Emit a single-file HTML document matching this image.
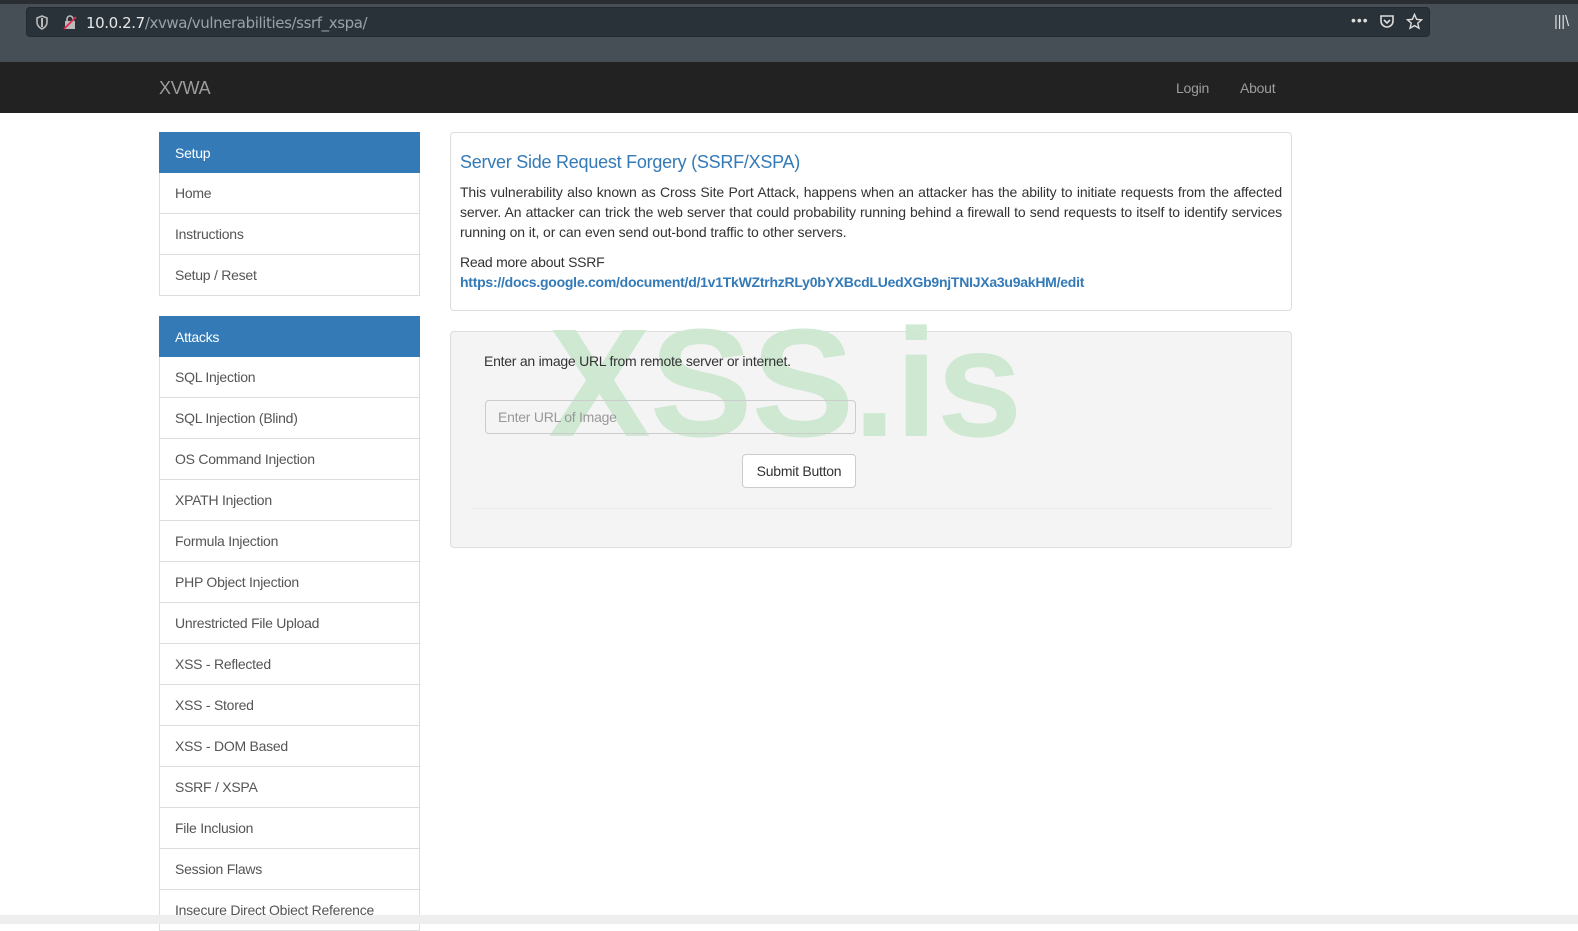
<!DOCTYPE html>
<html><head><meta charset="utf-8"><style>
*{box-sizing:border-box;margin:0;padding:0}
body{width:1578px;height:924px;overflow:hidden;font-family:"Liberation Sans",sans-serif;background:#fff;position:relative;font-size:14px;color:#333;letter-spacing:-0.25px}
.top{position:absolute;left:0;top:0;width:1578px;height:62px;background:#474f56;border-top:4px solid #2a2e33}
.url{position:absolute;left:26px;top:7px;width:1404px;height:30px;background:#2a3239;border-radius:4px;border:1px solid #222a30;letter-spacing:0}
.url .t{position:absolute;left:59px;top:6px;font-size:15px;color:#e6e8ea;font-family:"DejaVu Sans",sans-serif;letter-spacing:-.4px}
.url .t span{color:#9aa2a9}
.nav{position:absolute;left:0;top:62px;width:1578px;height:51px;background:#222}
.nav .b{position:absolute;left:159px;top:16px;font-size:18px;color:#9d9d9d}
.nav a{position:absolute;top:18px;font-size:14px;color:#9d9d9d}
.side{position:absolute;left:159px;width:261px}
.side div{height:41px;border:1px solid #ddd;border-top:none;padding:11px 15px;font-size:14px;color:#555;line-height:18px}
.side .h{background:#337ab7;color:#fff;border:1px solid #337ab7}
.p1{position:absolute;left:450px;top:132px;width:842px;height:179px;border:1px solid #ddd;border-radius:4px;padding:0 9px}
.p1 h3{font-weight:normal;color:#337ab7;font-size:18px;margin-top:19px}
.p1 p{text-align:justify;line-height:20px;margin-top:9px}
.p1 p.j{letter-spacing:-0.12px}
.p2{position:absolute;left:450px;top:331px;width:842px;height:217px;border:1px solid #ddd;border-radius:4px;background:#f4f4f4}
.wm{position:absolute;left:548px;top:306px;font-size:154px;font-weight:bold;color:#cde8d1;letter-spacing:-1px;line-height:1;opacity:.95}
input{position:absolute;left:485px;top:400px;width:371px;height:34px;border:1px solid #ccc;border-radius:4px;background:transparent;padding:6px 12px;font-size:14px;font-family:"Liberation Sans",sans-serif;letter-spacing:-0.25px}
input::placeholder{color:#999}
.btn{position:absolute;left:742px;top:454px;width:114px;height:34px;border:1px solid #ccc;border-radius:4px;background:#fff;font-size:14px;text-align:center;line-height:32px;color:#333}
</style></head><body>
<div class="top"></div>
<div class="url">
<svg style="position:absolute;left:8px;top:7px" width="14" height="15" viewBox="0 0 14 15"><path d="M7 1L2 3v4c0 3 2 5.5 5 7 3-1.5 5-4 5-7V3z" fill="none" stroke="#bbb" stroke-width="1.6"/><path d="M7 3v9" stroke="#bbb" stroke-width="2"/></svg>
<svg style="position:absolute;left:36px;top:7px" width="14" height="15" viewBox="0 0 14 15"><rect x="2" y="6" width="10" height="8" fill="#bbb"/><path d="M4 6V4a3 3 0 016 0v2" fill="none" stroke="#bbb" stroke-width="1.6"/><path d="M1 14L13 2" stroke="#e22850" stroke-width="1.8"/></svg>
<div class="t">10.0.2.7<span>/xvwa/vulnerabilities/ssrf_xspa/</span></div>
<div style="position:absolute;left:1324px;top:4px;color:#ddd;font-size:14px;letter-spacing:1px">•••</div>
<svg style="position:absolute;left:1352px;top:6px" width="16" height="16" viewBox="0 0 16 16"><path d="M2 2h12v5a6 6 0 01-12 0z" fill="none" stroke="#ddd" stroke-width="1.6"/><path d="M5 6l3 3 3-3" fill="none" stroke="#ddd" stroke-width="1.6"/></svg>
<svg style="position:absolute;left:1379px;top:5px" width="17" height="17" viewBox="0 0 24 24"><path d="M12 2l3 7 7 .6-5.4 4.7 1.7 7.2L12 17.8 5.7 21.5l1.7-7.2L2 9.6 9 9z" fill="none" stroke="#ddd" stroke-width="2"/></svg>
</div>
<div style="position:absolute;left:1554px;top:13px;color:#ddd;font-size:15px">|||\</div>
<div class="nav"><div class="b">XVWA</div><a style="left:1176px">Login</a><a style="left:1240px">About</a></div>
<div class="side" style="top:132px"><div class="h">Setup</div><div>Home</div><div>Instructions</div><div>Setup / Reset</div></div>
<div class="side" style="top:316px"><div class="h">Attacks</div><div>SQL Injection</div><div>SQL Injection (Blind)</div><div>OS Command Injection</div><div>XPATH Injection</div><div>Formula Injection</div><div>PHP Object Injection</div><div>Unrestricted File Upload</div><div>XSS - Reflected</div><div>XSS - Stored</div><div>XSS - DOM Based</div><div>SSRF / XSPA</div><div>File Inclusion</div><div>Session Flaws</div><div>Insecure Direct Object Reference</div></div>
<div class="p1"><h3>Server Side Request Forgery (SSRF/XSPA)</h3>
<p class="j">This vulnerability also known as Cross Site Port Attack, happens when an attacker has the ability to initiate requests from the affected server. An attacker can trick the web server that could probability running behind a firewall to send requests to itself to identify services running on it, or can even send out-bond traffic to other servers.</p>
<p style="margin-top:10px">Read more about SSRF<br><b style="color:#337ab7">https://docs.google.com/document/d/1v1TkWZtrhzRLy0bYXBcdLUedXGb9njTNIJXa3u9akHM/edit</b></p></div>
<div class="p2"><div style="position:absolute;left:20px;top:176px;width:800px;border-top:1px solid #eaeaea"></div></div>
<div class="wm">XSS.is</div>
<div style="position:absolute;left:484px;top:353px">Enter an image URL from remote server or internet.</div>
<input placeholder="Enter URL of Image">
<div class="btn">Submit Button</div>
<div style="position:absolute;left:0;top:915px;width:1578px;height:9px;background:#eeeeee"></div>
</body></html>
